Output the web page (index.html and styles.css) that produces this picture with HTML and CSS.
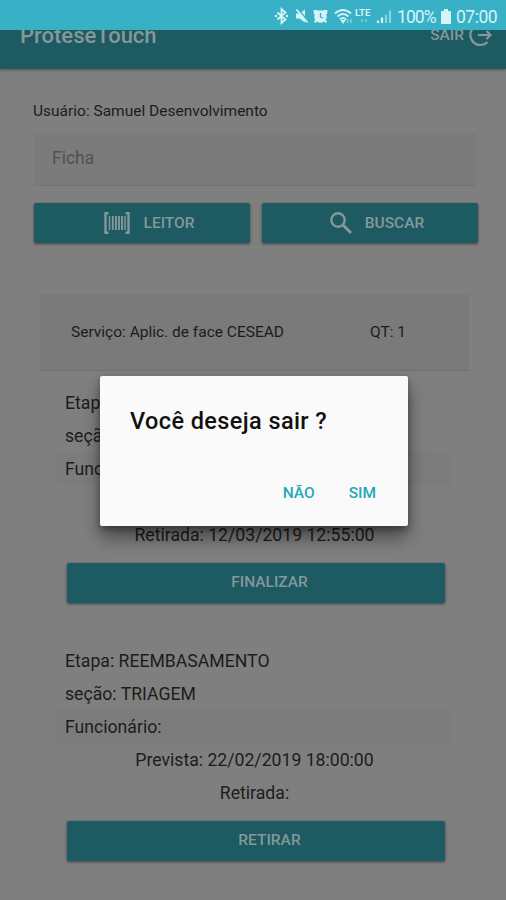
FILE: index.html
```html
<!DOCTYPE html>
<html lang="pt-BR">
<head>
<meta charset="utf-8">
<title>ProteseTouch</title>
<link rel="stylesheet" href="styles.css">
</head>
<body>
<div class="screen">
  <div class="status">
    <svg class="status-icons" width="122" height="30" viewBox="0 0 122 30" fill="none" stroke="#d5f4f8" stroke-width="1.800">
      <path d="M5.500 12.500l8 7-4 3.500V9l4 3.500-8 7"/>
      <path d="M4 16h.1M15 16h.1" stroke-width="2.400" stroke-linecap="round"/>
      <path d="M24 13.500h3.500l5.500-4v13l-5.500-4H24z" fill="#d5f4f8" stroke="none"/>
      <path d="M25.500 9l11 13" stroke="#38b1c7" stroke-width="2"/>
      <path d="M24.500 9.500l11 13"/>
      <circle cx="48.500" cy="16.500" r="6.200" fill="#d5f4f8" stroke="none"/>
      <path d="M42.800 14v-3h3M51.200 11h3v3M44 20.500l-1.200 2M53 20.500l1.200 2" stroke-width="2.200"/>
      <path d="M48.500 13v4l2.500 1" stroke="#38b1c7" stroke-width="1.300"/>
      <path d="M63 13.500q8-7 16 0M65.500 16.500q5.500-5 11 0M68 19.500q3-3 6 0"/>
      <path d="M70 21h2l-1 1.500z" fill="#d5f4f8"/>
      <path d="M75.500 19v4M79 19v4M90 19v3M94 19v3" stroke="#7fd0dd" stroke-width="1.500"/>
      <path d="M106 20.500V23M110 17.500V23" stroke-width="2.200"/>
      <path d="M114 14.500V23M118 10.500V23" stroke="#8bd3df" stroke-width="2.200"/>
    </svg>
    <span class="lte">LTE</span>
    <span class="percent">100%</span>
    <svg class="battery" width="10" height="15" viewBox="0 0 10 15"><path d="M3 0h4v2h2q1 0 1 1v11q0 1-1 1H1q-1 0-1-1V3q0-1 1-1h2z" fill="#d5f4f8"/></svg>
    <span class="clock">07:00</span>
  </div>
  <header class="appbar">
    <span class="title">ProteseTouch</span>
    <span class="logout">
      <span>SAIR</span>
      <svg width="24" height="24" viewBox="0 0 24 24" fill="none" stroke="#85989b" stroke-width="2.200"><path d="M18.500 5A10 10 0 1 0 18.500 19M9 12h12M17.500 8l4 4-4 4"/></svg>
    </span>
  </header>
  <main>
    <p class="user">Usuário: Samuel Desenvolvimento</p>
    <div class="field">Ficha</div>
    <div class="actions">
      <div class="btn reader">
        <svg width="28" height="24" viewBox="0 0 28 24" fill="none" stroke="#85989b" stroke-width="2.400"><path d="M5.500 2.200h-3v19.600h3M22.500 2.200h3v19.600h-3"/><path d="M6.500 5v14M22 5v14" stroke-width="1.500"/><path d="M9.800 5v14M13 5v14M16 5v14M19 5v14" stroke-width="1.900"/></svg>
        <span>LEITOR</span>
      </div>
      <div class="btn search">
        <svg width="24" height="24" viewBox="0 0 24 24" fill="none" stroke="#85989b" stroke-width="2.400"><circle cx="9" cy="9" r="6.700"/><path d="M14 14l8 8" stroke-width="3"/></svg>
        <span>BUSCAR</span>
      </div>
    </div>
    <hr class="rule">
    <div class="service"><span>Serviço: Aplic. de face CESEAD</span><span>QT: 1</span></div>
    <section class="stage">
      <p>Etapa:</p>
      <p>seção:</p>
      <p class="worker">Funcionário:</p>
      <p></p>
      <p class="center">Retirada: 12/03/2019 12:55:00</p>
      <div class="btn wide"><span>FINALIZAR</span></div>
    </section>
    <section class="stage">
      <p>Etapa: REEMBASAMENTO</p>
      <p>seção: TRIAGEM</p>
      <p class="worker">Funcionário:</p>
      <p class="center">Prevista: 22/02/2019 18:00:00</p>
      <p class="center">Retirada:</p>
      <div class="btn wide"><span>RETIRAR</span></div>
    </section>
  </main>
  <div class="dialog">
    <h1>Você deseja sair ?</h1>
    <div class="choices"><span>NÃO</span><span>SIM</span></div>
  </div>
</div>
</body>
</html>
```

FILE: styles.css
```css
* { box-sizing: border-box; }
body { margin: 0; font-family: Roboto, "Liberation Sans", sans-serif; color: #1c1c1c; }
p, h1 { margin: 0; }
.screen { position: relative; width: 506px; height: 900px; overflow: hidden; background: #7f7f7f; }
.status { position: relative; z-index: 2; height: 30px; background: #38b1c7; color: #d5f4f8; display: flex; align-items: center; padding: 3px 8px 0 272px; font-size: 17.5px; }
.status-icons { flex: none; margin-top: -3px; }
.lte { position: absolute; left: 355px; top: 7px; font-size: 9.5px; line-height: 11px; font-weight: 700; }
.percent { margin-left: 3px; width: 39px; letter-spacing: -.9px; white-space: nowrap; }
.battery { margin: -1px 5px 0 5px; flex: none; }
.clock { letter-spacing: -.5px; white-space: nowrap; }
.appbar { height: 39px; background: #1d5a62; color: #85989b; display: flex; justify-content: space-between; align-items: center; padding: 0 13px 29px 20px; box-shadow: 0 1px 3px rgba(0,0,0,.35); }
.title { font-size: 22px; font-weight: 500; }
.logout { display: flex; align-items: center; gap: 5px; font-size: 15.5px; font-weight: 500; }
main { padding: 31px 28px 0 33px; }
.user { font-size: 15.5px; line-height: 22px; }
.field { height: 53px; margin: 11px 2px 0 1px; padding: 0 18px; line-height: 51px; font-size: 17.5px; color: #515151; background: #7b7b7b; border-bottom: 1px solid #747474; border-radius: 3px 3px 0 0; }
.actions { display: grid; grid-template-columns: 216px 216px; gap: 12px; margin: 17px 0 0 1px; }
.btn { height: 40px; background: #1d5a62; color: #85989b; border-radius: 2px; display: flex; align-items: center; justify-content: center; font-size: 15.5px; font-weight: 500; box-shadow: 0 1px 3px rgba(0,0,0,.5); }
.btn svg { flex: none; }
.reader { gap: 13px; padding-left: 13px; }
.search { gap: 12px; padding-left: 13px; }
.rule { border: 0; height: 1px; background: #7c7c7c; margin: 23px -12px 0; }
.service { height: 77px; margin: 27px 9px 0 7px; padding: 0 63px 0 31px; display: flex; justify-content: space-between; line-height: 76px; font-size: 15.5px; background: #7a7a7a; border-bottom: 1px solid #707070; }
.stage { margin: 15px 26px 0 24px; padding-bottom: 26px; font-size: 17.65px; line-height: 35px; }
.stage p { padding-left: 8px; height: 33px; white-space: nowrap; }
.stage .worker { background: #7c7c7c; }
.stage .center { text-align: center; padding-left: 0; }
.wide { margin: 12px 7px 0 10px; padding: 0 0 2px 28px; }
.dialog { position: absolute; left: 100px; top: 376px; width: 308px; height: 150px; padding: 29px 32px 0 30px; background: #fafafa; border-radius: 2px; box-shadow: 0 12px 18px rgba(0,0,0,.42), 0 3px 6px rgba(0,0,0,.3); }
.dialog h1 { font-size: 23.5px; line-height: 32px; font-weight: 500; letter-spacing: .4px; color: #111; white-space: nowrap; }
.choices { margin-top: 46px; display: flex; justify-content: flex-end; gap: 34px; color: #26a8b8; font-size: 15.5px; line-height: 20px; font-weight: 500; }
.wide { padding-left: 28px; }
.stage .wide span { padding-right: 1px; line-height: 20px; }
```
